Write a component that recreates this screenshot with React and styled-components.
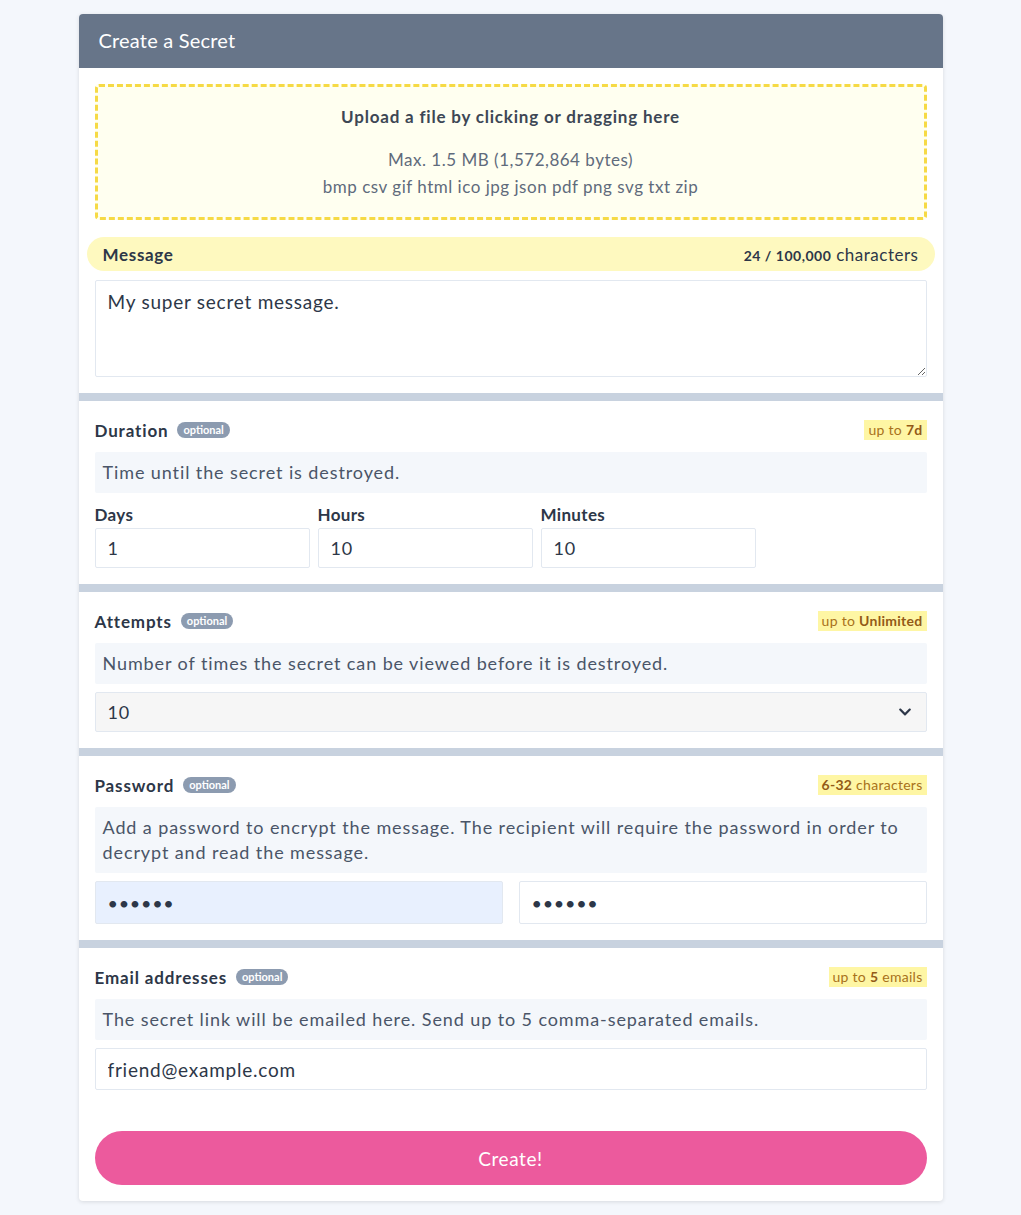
import { createGlobalStyle } from "styled-components";
import styled from "styled-components";
import { FaChevronDown } from "react-icons/fa";

const GlobalStyle = createGlobalStyle`
  body {
    margin: 0;
    background: #f4f7fc;
    font-family: Lato, "Noto Sans", sans-serif;
    color: #2d3748;
  }
  * {
    box-sizing: border-box;
  }
`;

const Card = styled.div`
  width: 864px;
  margin: 14px auto 14px;
  background: #fff;
  border-radius: 4px;
  box-shadow: 0 1px 4px rgba(0, 0, 0, 0.12);
  overflow: hidden;
`;

const Header = styled.div`
  height: 54px;
  background: #677589;
  color: #fff;
  font-size: 20px;
  letter-spacing: 0.01em;
  display: flex;
  align-items: center;
  padding: 0 20px 3px;
`;

const Section = styled.div`
  padding: 16px 16px 16px;
  border-top: ${({ $first }) => ($first ? "none" : "8px solid #c8d2df")};
  display: flex;
  flex-direction: column;
`;

const Upload = styled.div`
  height: 136px;
  border: 3px dashed #f6da45;
  border-radius: 4px;
  background: #fffff0;
  display: flex;
  flex-direction: column;
  align-items: center;
  padding-top: 16px;
  color: #5f6b7c;
  font-size: 17px;
  line-height: 27px;
  letter-spacing: 0.03em;
`;

const UploadTitle = styled.div`
  font-weight: 700;
  color: #3d4755;
  letter-spacing: 0.047em;
  margin-bottom: 16px;
`;

const MessageBar = styled.div`
  margin: 17px -8px 9px;
  height: 34px;
  background: #fef9bf;
  border-radius: 17px;
  display: flex;
  align-items: center;
  justify-content: space-between;
  padding: 0 16px;
  font-size: 17px;
  font-weight: 700;
  letter-spacing: 0.04em;
  color: #2d3748;
`;

const Count = styled.span`
  font-weight: 400;
  font-size: 17px;
  letter-spacing: 0.03em;
  b {
    font-size: 14px;
    font-weight: 700;
  }
`;

const TextArea = styled.textarea`
  height: 97px;
  border: 1px solid #e2e8f0;
  border-radius: 2px;
  padding: 9px 12px;
  font-family: inherit;
  font-size: 19px;
  letter-spacing: 0.04em;
  color: #2d3748;
  outline: none;
`;

const LabelRow = styled.div`
  height: 26px;
  display: flex;
  align-items: center;
  justify-content: space-between;
  margin-bottom: 9px;
`;

const Title = styled.div`
  display: flex;
  align-items: center;
  gap: 9px;
  font-size: 17px;
  font-weight: 700;
  letter-spacing: 0.05em;
  color: #2d3748;
`;

const Optional = styled.span`
  background: #8c9bb0;
  color: #fff;
  font-size: 11px;
  font-weight: 700;
  letter-spacing: 0;
  padding: 1px 6px 2px;
  border-radius: 8px;
  line-height: 13px;
`;

const Limit = styled.span`
  background: #fef6a4;
  color: #a8711a;
  font-size: 14px;
  letter-spacing: 0.02em;
  padding: 1px 4px;
  line-height: 18px;
  b {
    color: #935a17;
    font-weight: 700;
  }
`;

const Help = styled.div`
  background: #f4f7fb;
  border-radius: 2px;
  padding: 8px 8px;
  font-size: 18px;
  line-height: 25px;
  letter-spacing: 0.05em;
  color: #4a5568;
  margin-bottom: 8px;
`;

const FieldGrid = styled.div`
  display: grid;
  grid-template-columns: repeat(3, 215px);
  gap: 8px;
`;

const Field = styled.div`
  display: flex;
  flex-direction: column;
`;

const FieldLabel = styled.div`
  height: 27px;
  display: flex;
  align-items: center;
  font-size: 17px;
  font-weight: 700;
  letter-spacing: 0.02em;
  color: #2d3748;
`;

const Input = styled.input`
  height: ${({ $h }) => $h || 40}px;
  width: 100%;
  border: 1px solid #e2e8f0;
  border-radius: 2px;
  background: ${({ $filled }) => ($filled ? "#e8f0fe" : "#fff")};
  padding: 0 12px;
  font-family: inherit;
  font-size: ${({ $size }) => $size || 18}px;
  letter-spacing: 0.04em;
  color: #2d3748;
  outline: none;
`;

const SelectWrap = styled.div`
  position: relative;
  height: 40px;
  svg {
    position: absolute;
    right: 15px;
    top: 13px;
    color: #2d3748;
    pointer-events: none;
  }
`;

const Select = styled.select`
  appearance: none;
  width: 100%;
  height: 100%;
  border: 1px solid #e2e8f0;
  border-radius: 2px;
  background: #f6f6f6;
  padding: 0 12px;
  font-family: inherit;
  font-size: 18px;
  letter-spacing: 0.04em;
  color: #2d3748;
  outline: none;
`;

const PairRow = styled.div`
  display: grid;
  grid-template-columns: 1fr 1fr;
  gap: 16px;
`;

const CreateButton = styled.button`
  margin-top: 41px;
  height: 54px;
  border: none;
  border-radius: 27px;
  background: #ec5a9d;
  color: #fff;
  font-family: inherit;
  font-size: 19px;
  letter-spacing: 0.03em;
  cursor: pointer;
`;

function Heading({ title, children }) {
  return (
    <LabelRow>
      <Title>
        {title}
        <Optional>optional</Optional>
      </Title>
      <Limit>{children}</Limit>
    </LabelRow>
  );
}

export default function App() {
  return (
    <>
      <GlobalStyle />
      <Card>
        <Header>Create a Secret</Header>
        <Section $first>
          <Upload>
            <UploadTitle>Upload a file by clicking or dragging here</UploadTitle>
            <div>Max. 1.5 MB (1,572,864 bytes)</div>
            <div>bmp csv gif html ico jpg json pdf png svg txt zip</div>
          </Upload>
          <MessageBar>
            Message
            <Count>
              <b>24 / 100,000</b> characters
            </Count>
          </MessageBar>
          <TextArea defaultValue="My super secret message." />
        </Section>
        <Section>
          <Heading title="Duration">
            up to <b>7d</b>
          </Heading>
          <Help>Time until the secret is destroyed.</Help>
          <FieldGrid>
            {[
              ["Days", "1"],
              ["Hours", "10"],
              ["Minutes", "10"],
            ].map(([label, value]) => (
              <Field key={label}>
                <FieldLabel>{label}</FieldLabel>
                <Input defaultValue={value} />
              </Field>
            ))}
          </FieldGrid>
        </Section>
        <Section>
          <Heading title="Attempts">
            up to <b>Unlimited</b>
          </Heading>
          <Help>Number of times the secret can be viewed before it is destroyed.</Help>
          <SelectWrap>
            <Select defaultValue="10">
              <option value="10">10</option>
            </Select>
            <FaChevronDown size={14} />
          </SelectWrap>
        </Section>
        <Section>
          <Heading title="Password">
            <b>6-32</b> characters
          </Heading>
          <Help>
            Add a password to encrypt the message. The recipient will require the
            password in order to decrypt and read the message.
          </Help>
          <PairRow>
            <Input $h={43} $filled type="password" defaultValue="secret" />
            <Input $h={43} type="password" defaultValue="secret" />
          </PairRow>
        </Section>
        <Section>
          <Heading title="Email addresses">
            up to <b>5</b> emails
          </Heading>
          <Help>The secret link will be emailed here. Send up to 5 comma-separated emails.</Help>
          <Input $h={42} $size={19} defaultValue="friend@example.com" />
          <CreateButton>Create!</CreateButton>
        </Section>
      </Card>
    </>
  );
}
